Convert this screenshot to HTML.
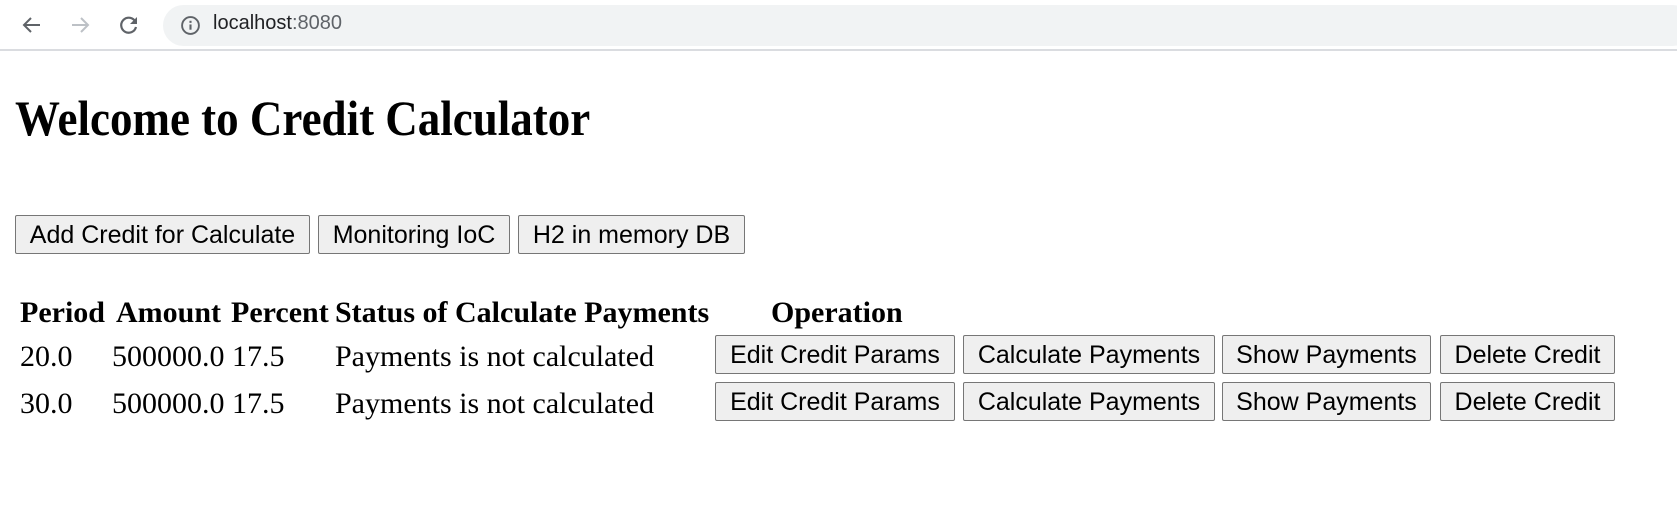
<!DOCTYPE html>
<html><head><meta charset="utf-8"><style>
*{margin:0;padding:0;box-sizing:border-box}
body{width:1677px;height:518px;background:#fff;position:relative;overflow:hidden;font-family:"Liberation Serif",serif}
.bar{position:absolute;left:0;top:0;width:1677px;height:51px;background:#fff;border-bottom:2px solid #dadce0}
.addr{position:absolute;left:163px;top:5px;width:1530px;height:41px;background:#f1f3f4;border-radius:21px}
.url{position:absolute;left:213px;top:12px;font:20px "Liberation Sans",sans-serif;color:#202124}
.url span{color:#5f6368}
.a{position:absolute}
.btn{position:absolute;height:39px;background:#efefef;border:1px solid #767676;border-radius:2px;font:25px "Liberation Sans",sans-serif;color:#000;text-align:center;line-height:38px;white-space:nowrap}
h1{position:absolute;left:15px;top:88px;font:bold 50px/60px "Liberation Serif",serif;white-space:nowrap;transform:scaleX(0.9);transform-origin:left}
.th{position:absolute;top:298px;font:bold 30px/30px "Liberation Serif",serif;white-space:nowrap}
.td{position:absolute;font:30px/30px "Liberation Serif",serif;white-space:nowrap}
</style></head><body>
<div class="bar">
<svg class="a" style="left:20px;top:13px" width="24" height="24" viewBox="0 0 24 24"><path d="M20 12H5M11 5l-7 7 7 7" stroke="#5f6368" stroke-width="2" fill="none"/></svg>
<svg class="a" style="left:68px;top:13px" width="24" height="24" viewBox="0 0 24 24"><path d="M4 12h15M13 5l7 7-7 7" stroke="#bdc1c6" stroke-width="2" fill="none"/></svg>
<svg class="a" style="left:117px;top:13px" width="24" height="24" viewBox="0 0 24 24"><path d="M18.5 9A7.5 7.5 0 1 0 19 14" stroke="#5f6368" stroke-width="2.2" fill="none"/><path d="M20 4v7h-7z" fill="#5f6368"/></svg>
<div class="addr"></div>
<svg class="a" style="left:180px;top:15px" width="21" height="21" viewBox="0 0 20 20"><circle cx="10" cy="10" r="8" stroke="#5f6368" stroke-width="1.8" fill="none"/><rect x="9" y="9" width="2" height="5" fill="#5f6368"/><rect x="9" y="5.5" width="2" height="2" fill="#5f6368"/></svg>
<div class="url">localhost<span>:8080</span></div>
</div>
<h1>Welcome to Credit Calculator</h1>
<div class="btn" style="left:15px;top:215px;width:295px">Add Credit for Calculate</div>
<div class="btn" style="left:318px;top:215px;width:192px">Monitoring IoC</div>
<div class="btn" style="left:518px;top:215px;width:227px">H2 in memory DB</div>
<div class="th" style="left:20px">Period</div>
<div class="th" style="left:116px">Amount</div>
<div class="th" style="left:231px">Percent</div>
<div class="th" style="left:335px">Status of Calculate Payments</div>
<div class="th" style="left:771px">Operation</div>
<div class="td" style="left:20px;top:342px">20.0</div>
<div class="td" style="left:112px;top:342px">500000.0</div>
<div class="td" style="left:232px;top:342px">17.5</div>
<div class="td" style="left:335px;top:342px">Payments is not calculated</div>
<div class="td" style="left:20px;top:389px">30.0</div>
<div class="td" style="left:112px;top:389px">500000.0</div>
<div class="td" style="left:232px;top:389px">17.5</div>
<div class="td" style="left:335px;top:389px">Payments is not calculated</div>
<div class="btn" style="left:715px;top:335px;width:240px">Edit Credit Params</div>
<div class="btn" style="left:963px;top:335px;width:252px">Calculate Payments</div>
<div class="btn" style="left:1222px;top:335px;width:209px">Show Payments</div>
<div class="btn" style="left:1440px;top:335px;width:175px">Delete Credit</div>
<div class="btn" style="left:715px;top:382px;width:240px">Edit Credit Params</div>
<div class="btn" style="left:963px;top:382px;width:252px">Calculate Payments</div>
<div class="btn" style="left:1222px;top:382px;width:209px">Show Payments</div>
<div class="btn" style="left:1440px;top:382px;width:175px">Delete Credit</div>
</body></html>
